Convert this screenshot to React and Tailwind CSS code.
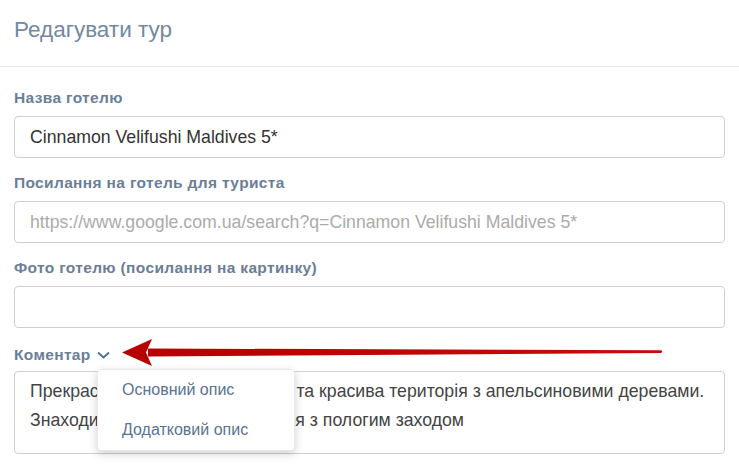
const font = { fontFamily: '"Liberation Sans", Arial, sans-serif' };

const Field = ({ label, value, placeholder }) => (
  <div className="mb-[17px]">
    <label className="block h-5 leading-4 mb-[6px] text-[15.5px] tracking-[0.35px] font-bold text-[#6b7e98]">
      {label}
    </label>
    <input
      defaultValue={value}
      placeholder={placeholder}
      className="block w-full h-[42px] px-[15px] border border-[#cfcfcf] rounded-[4px] text-[17.7px] text-[#333] placeholder:text-[#ababab] outline-none"
    />
  </div>
);

export default function App() {
  return (
    <div className="w-[739px] h-[466px] overflow-hidden bg-white relative" style={font}>
      <div className="h-[67px] border-b border-[#e6e6e6] px-[14px] pt-[15px]">
        <h1 className="text-[22.5px] leading-[30px] text-[#7388a3]">Редагувати тур</h1>
      </div>

      <div className="px-[14px] pt-[23px]">
        <Field label="Назва готелю" value="Cinnamon Velifushi Maldives 5*" />
        <Field
          label="Посилання на готель для туриста"
          placeholder="https://www.google.com.ua/search?q=Cinnamon Velifushi Maldives 5*"
        />
        <Field label="Фото готелю (посилання на картинку)" />

        <div className="relative">
          <div className="flex items-center gap-[6px] h-5 mb-[6px]">
            <span className="text-[15.5px] tracking-[0.35px] font-bold leading-4 text-[#6b7e98]">Коментар</span>
            <svg width="13" height="10" viewBox="0 0 13 10">
              <path d="M1 2.5 L6.5 7.5 L12 2.5" fill="none" stroke="#4a7099" strokeWidth="1.8" />
            </svg>
          </div>
          <textarea
            readOnly
            rows={3}
            defaultValue={"Прекрасний готель, є доглянута та красива територія з апельсиновими деревами.\nЗнаходиться на першій лінії моря з пологим заходом"}
            className="block w-full h-[83px] px-[15px] pt-[5px] border border-[#cfcfcf] rounded-[4px] text-[17.7px] leading-[29px] text-[#444] resize-none outline-none"
          />

          {/* dropdown menu */}
          <div className="absolute left-[83px] top-[24px] w-[198px] bg-white rounded-[4px] border border-[#e8e8e8] shadow-[0_3px_10px_rgba(0,0,0,0.18)]">
            <div className="h-[40px] leading-[40px] pl-[24px] text-[16px] text-[#5a7291]">Основний опис</div>
            <div className="h-[40px] leading-[40px] pl-[24px] text-[16px] text-[#5a7291]">Додатковий опис</div>
          </div>

          {/* red arrow */}
          <svg
            className="absolute left-[106px] top-[-8px]"
            width="550"
            height="30"
            viewBox="0 0 550 30"
          >
            <defs>
              <linearGradient id="shaft" x1="0" x2="1" y1="0" y2="0">
                <stop offset="0" stopColor="#b80000" />
                <stop offset="1" stopColor="#c80b0b" />
              </linearGradient>
            </defs>
            <path d="M28 11.5 L541 13.3 Q543.5 14.5 541 15.9 L28 19.5 Z" fill="url(#shaft)" />
            <path d="M2 15.5 L32 2 L26 15.5 L32 29 Z" fill="#b70000" />
          </svg>
        </div>
      </div>
    </div>
  );
}
